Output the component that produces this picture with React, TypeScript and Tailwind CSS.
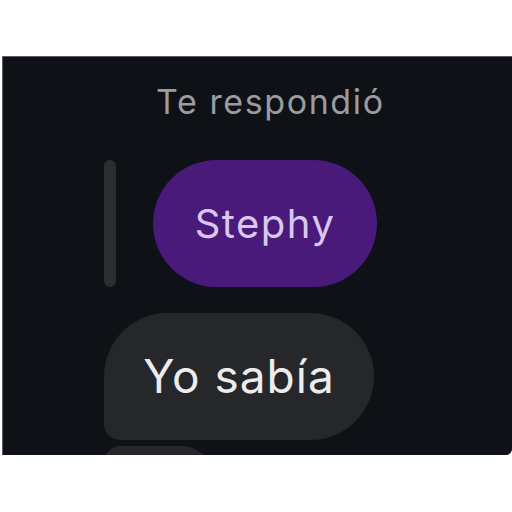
export default function App() {
  return (
    <div className="w-[512px] h-[512px] bg-white overflow-hidden font-['Inter',sans-serif]">
      <div className="mt-[56px] ml-[2px] h-[399px] bg-[#0e1116] border-t border-l border-[#5a5c60] rounded-br-[6px] overflow-hidden pl-[101px]">
        <div className="h-[103px] pt-[25px] pl-[52px]">
          <span className="text-[34px] leading-[40px] text-[#9b9ca0] tracking-[1.6px]">Te respondió</span>
        </div>
        <div className="flex gap-[37px]">
          <div className="w-[12px] h-[127px] rounded-full bg-[#2b2d31]" />
          <div className="w-[224px] h-[127px] rounded-full bg-[#4a1a7b] flex items-center justify-center">
            <span className="text-[40px] text-[#d9c7ee] tracking-[1.5px]">Stephy</span>
          </div>
        </div>
        <div className="mt-[26px] w-[270px] h-[127px] bg-[#25272b] rounded-[64px] rounded-bl-[16px] flex items-center justify-center">
          <span className="text-[46px] text-[#ececec] tracking-[1px]">Yo sabía</span>
        </div>
        <div className="mt-[6px] w-[108px] h-[60px] bg-[#25272b] rounded-[30px] rounded-tl-[16px]" />
      </div>
    </div>
  )
}
